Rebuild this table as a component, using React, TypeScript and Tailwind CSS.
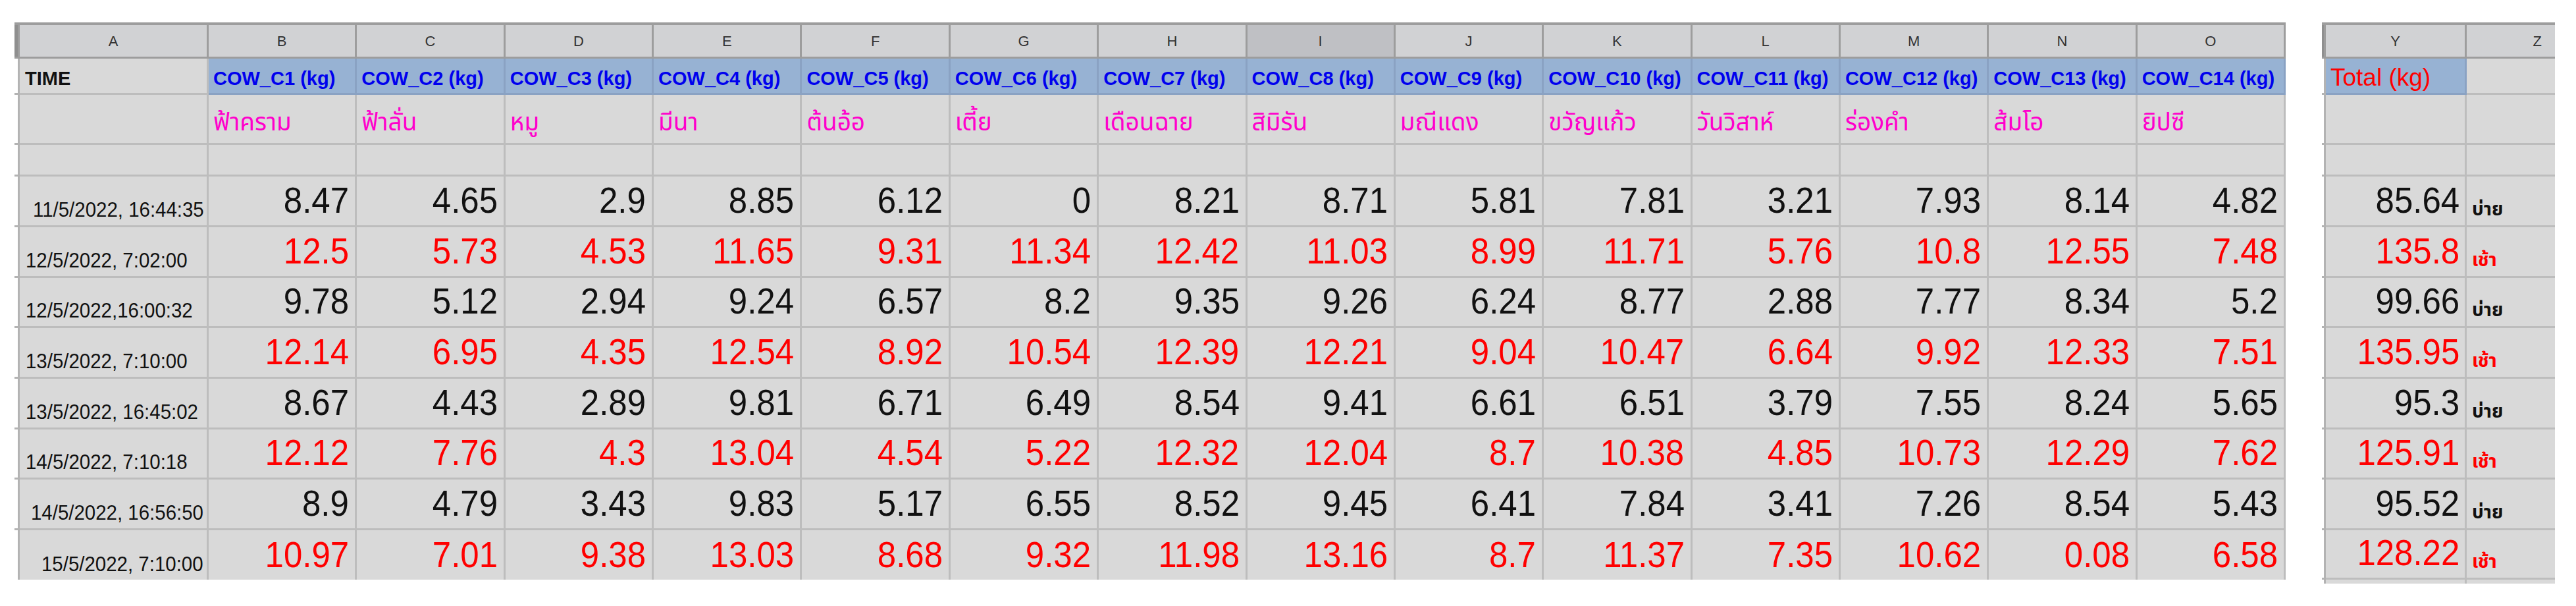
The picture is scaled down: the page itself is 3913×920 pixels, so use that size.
import React from "react";

const letters = ["A", "B", "C", "D", "E", "F", "G", "H", "I", "J", "K", "L", "M", "N", "O"];
const names = ["ฟ้าคราม", "ฟ้าลั่น", "หมู", "มีนา", "ต้นอ้อ", "เตี้ย", "เดือนฉาย", "สิมิรัน", "มณีแดง", "ขวัญแก้ว", "วันวิสาห์", "ร่องคำ", "ส้มโอ", "ยิปซี"];

interface Row {
  time: string;
  pad: string;
  red: boolean;
  vals: string[];
  total: string;
  h: string;
}

const rows: Row[] = [
  { time: "11/5/2022, 16:44:35", pad: "pl-[20px]", red: false, h: "h-[77px]", total: "85.64",
    vals: ["8.47", "4.65", "2.9", "8.85", "6.12", "0", "8.21", "8.71", "5.81", "7.81", "3.21", "7.93", "8.14", "4.82"] },
  { time: "12/5/2022, 7:02:00", pad: "pl-[9px]", red: true, h: "h-[77px]", total: "135.8",
    vals: ["12.5", "5.73", "4.53", "11.65", "9.31", "11.34", "12.42", "11.03", "8.99", "11.71", "5.76", "10.8", "12.55", "7.48"] },
  { time: "12/5/2022,16:00:32", pad: "pl-[9px]", red: false, h: "h-[76px]", total: "99.66",
    vals: ["9.78", "5.12", "2.94", "9.24", "6.57", "8.2", "9.35", "9.26", "6.24", "8.77", "2.88", "7.77", "8.34", "5.2"] },
  { time: "13/5/2022, 7:10:00", pad: "pl-[9px]", red: true, h: "h-[77px]", total: "135.95",
    vals: ["12.14", "6.95", "4.35", "12.54", "8.92", "10.54", "12.39", "12.21", "9.04", "10.47", "6.64", "9.92", "12.33", "7.51"] },
  { time: "13/5/2022, 16:45:02", pad: "pl-[9px]", red: false, h: "h-[77px]", total: "95.3",
    vals: ["8.67", "4.43", "2.89", "9.81", "6.71", "6.49", "8.54", "9.41", "6.61", "6.51", "3.79", "7.55", "8.24", "5.65"] },
  { time: "14/5/2022, 7:10:18", pad: "pl-[9px]", red: true, h: "h-[76px]", total: "125.91",
    vals: ["12.12", "7.76", "4.3", "13.04", "4.54", "5.22", "12.32", "12.04", "8.7", "10.38", "4.85", "10.73", "12.29", "7.62"] },
  { time: "14/5/2022, 16:56:50", pad: "pl-[17px]", red: false, h: "h-[77px]", total: "95.52",
    vals: ["8.9", "4.79", "3.43", "9.83", "5.17", "6.55", "8.52", "9.45", "6.41", "7.84", "3.41", "7.26", "8.54", "5.43"] },
  { time: "15/5/2022, 7:10:00", pad: "pl-[33px]", red: true, h: "h-[75px]", total: "128.22",
    vals: ["10.97", "7.01", "9.38", "13.03", "8.68", "9.32", "11.98", "13.16", "8.7", "11.37", "7.35", "10.62", "0.08", "6.58"] },
];

function Stub({ dark, h, last }: { dark?: boolean; h: string; last?: boolean }) {
  return (
    <div
      className={`${h} border-r-[3px] ${dark ? "bg-[#8f8f8f] border-[#9d9d9d] border-t-4 border-b-[3px]" : last ? "bg-white border-[#b3b3b3]" : "bg-white border-[#b3b3b3] border-b-[3px]"}`}
    />
  );
}

// numbers in the sheet are a touch taller and narrower than plain Arial
function Num({ v, red }: { v: string; red: boolean }) {
  return (
    <span className={`inline-block origin-right scale-x-91 ${red ? "text-[#ff0000]" : "text-[#111]"}`}>{v}</span>
  );
}

function LeftTable() {
  return (
    <div className="w-[3450px] grid grid-cols-[8px_287px_repeat(14,minmax(0,1fr))]">
      {/* column letters */}
      <Stub dark h="h-[55px]" />
      {letters.map((l, i) => (
        <div
          key={l}
          className={`h-[55px] flex items-center justify-center border-t-4 border-b-[3px] border-r-[3px] border-[#9d9d9d] text-[22px] text-[#333] ${i === 8 ? "bg-[#bfc0c4]" : "bg-[#d1d2d4]"}`}
        >
          {l}
        </div>
      ))}

      {/* titles */}
      <Stub h="h-[55px]" />
      <div className="h-[55px] flex items-end pl-[8px] pb-[7px] bg-[#d9d9d9] border-r-[3px] border-b-[3px] border-[#bdbdbd] text-[29px] leading-none font-bold text-[#111]">
        TIME
      </div>
      {names.map((_, i) => (
        <div
          key={i}
          className="h-[55px] flex items-end pl-[7px] pb-[7px] bg-[#97b2d3] border-r-[3px] border-b-[3px] border-[#8aa2c3] text-[29px] leading-none font-bold text-[#0000ee] whitespace-nowrap overflow-hidden"
        >
          COW_C{i + 1} (kg)
        </div>
      ))}

      {/* thai names */}
      <Stub h="h-[76px]" />
      <div className="h-[76px] bg-[#d9d9d9] border-r-[3px] border-b-[3px] border-[#bdbdbd]" />
      {names.map((n) => (
        <div
          key={n}
          className="h-[76px] flex items-end pl-[7px] pb-[13px] bg-[#d9d9d9] border-r-[3px] border-b-[3px] border-[#bdbdbd] text-[37px] leading-none text-[#ff00cc] whitespace-nowrap"
        >
          {n}
        </div>
      ))}

      {/* empty row */}
      <Stub h="h-[48px]" />
      {letters.map((l) => (
        <div key={l} className="h-[48px] bg-[#d9d9d9] border-r-[3px] border-b-[3px] border-[#bdbdbd]" />
      ))}

      {/* data rows */}
      {rows.map((r, ri) => {
        const last = ri === rows.length - 1;
        return (
          <React.Fragment key={r.time}>
            <Stub h={r.h} last={last} />
            <div
              className={`${r.h} flex items-end ${r.pad} pb-[8px] bg-[#d9d9d9] border-r-[3px] border-[#bdbdbd] text-[32px] leading-none text-[#111] whitespace-nowrap ${last ? "" : "border-b-[3px]"}`}
            >
              <span className="inline-block origin-left scale-x-92">{r.time}</span>
            </div>
            {r.vals.map((v, vi) => (
              <div
                key={vi}
                className={`${r.h} flex items-end justify-end pr-[9px] pb-[10px] bg-[#d9d9d9] border-r-[3px] border-[#bdbdbd] text-[56px] leading-none ${last ? "" : "border-b-[3px]"}`}
              >
                <Num v={v} red={r.red} />
              </div>
            ))}
          </React.Fragment>
        );
      })}
    </div>
  );
}

function RightTable() {
  return (
    <div className="w-[354px] grid grid-cols-[6px_214px_134px]">
      <Stub dark h="h-[55px]" />
      <div className="h-[55px] flex items-center justify-center border-t-4 border-b-[3px] border-r-[3px] border-[#9d9d9d] bg-[#d1d2d4] text-[22px] text-[#333]">
        Y
      </div>
      <div className="h-[55px] flex items-center justify-end pr-[20px] border-t-4 border-b-[3px] border-[#9d9d9d] bg-[#d1d2d4] text-[22px] text-[#333]">
        Z
      </div>

      <Stub h="h-[55px]" />
      <div className="h-[55px] flex items-end pl-[7px] pb-[5px] bg-[#97b2d3] border-r-[3px] border-b-[3px] border-[#8aa2c3] text-[37px] leading-none text-[#ff0000] whitespace-nowrap">
        Total (kg)
      </div>
      <div className="h-[55px] bg-[#d9d9d9] border-b-[3px] border-[#bdbdbd]" />

      <Stub h="h-[76px]" />
      <div className="h-[76px] bg-[#d9d9d9] border-r-[3px] border-b-[3px] border-[#bdbdbd]" />
      <div className="h-[76px] bg-[#d9d9d9] border-b-[3px] border-[#bdbdbd]" />

      <Stub h="h-[48px]" />
      <div className="h-[48px] bg-[#d9d9d9] border-r-[3px] border-b-[3px] border-[#bdbdbd]" />
      <div className="h-[48px] bg-[#d9d9d9] border-b-[3px] border-[#bdbdbd]" />

      {rows.map((r) => (
        <React.Fragment key={r.time}>
          <Stub h={r.h} />
          <div className="h-full flex items-end justify-end pr-[8px] pb-[10px] bg-[#d9d9d9] border-r-[3px] border-b-[3px] border-[#bdbdbd] text-[56px] leading-none">
            <Num v={r.total} red={r.red} />
          </div>
          <div
            className={`${r.h} flex items-end pl-[8px] pb-[10px] bg-[#d9d9d9] border-b-[3px] border-[#bdbdbd] text-[28px] leading-none font-bold ${r.red ? "text-[#ff0000]" : "text-[#111]"}`}
          >
            {r.red ? "เช้า" : "บ่าย"}
          </div>
        </React.Fragment>
      ))}

      <Stub h="h-[6px]" last />
      <div className="h-[6px] bg-[#d9d9d9] border-r-[3px] border-[#bdbdbd]" />
      <div className="h-[6px] bg-[#d9d9d9]" />
    </div>
  );
}

export default function App() {
  return (
    <div className="w-[3913px] h-[920px] bg-white pt-[34px] pl-[22px] flex items-start gap-[55px] font-['Liberation_Sans','Noto_Sans_Thai','Tlwg_Typist',sans-serif]">
      <LeftTable />
      <RightTable />
    </div>
  );
}
